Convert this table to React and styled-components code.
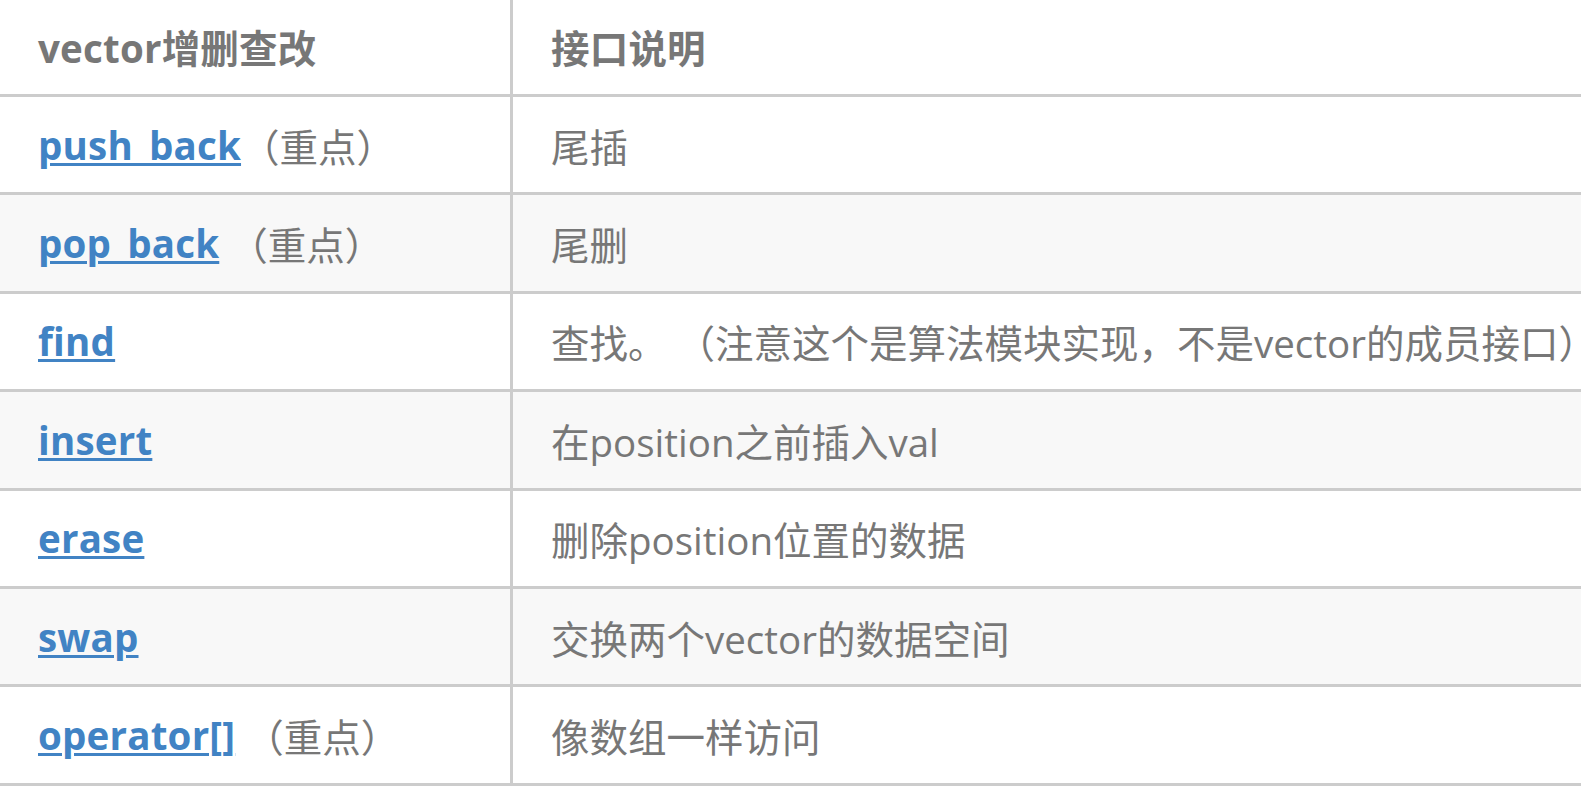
import styled, { createGlobalStyle } from "styled-components";

const rows = [
  { name: "push_back", note: "（重点）", desc: "尾插" },
  { name: "pop_back", note: " （重点）", desc: "尾删" },
  { name: "find", desc: "查找。 （注意这个是算法模块实现，不是vector的成员接口）" },
  { name: "insert", desc: "在position之前插入val" },
  { name: "erase", desc: "删除position位置的数据" },
  { name: "swap", desc: "交换两个vector的数据空间" },
  { name: "operator[]", note: " （重点）", desc: "像数组一样访问" },
];

const GlobalStyle = createGlobalStyle`
  html, body {
    margin: 0;
    padding: 0;
    background: #ffffff;
    overflow: hidden;
  }
`;

const Page = styled.div`
  width: 1581px;
  height: 787px;
  overflow: hidden;
  font-family: "Open Sans", "Noto Sans CJK SC", sans-serif;
  font-size: 38.5px;
  color: #777777;
`;

const Table = styled.div`
  margin-top: -1.4px;
  display: grid;
  grid-template-columns: 510px 1fr;
  grid-auto-rows: 95.4px;
  gap: 3px;
  background: #cccccc;
  border-bottom: 3px solid #cccccc;
`;

const Cell = styled.div`
  display: flex;
  align-items: center;
  padding-left: 38px;
  white-space: pre;
  background: ${(p) => (p.$striped ? "#f8f8f8" : "#ffffff")};
  font-weight: ${(p) => (p.$head ? 700 : 400)};
  letter-spacing: ${(p) => (p.$head ? "0.2px" : "0")};
`;

const Link = styled.a`
  color: #4183c4;
  font-weight: 700;
  letter-spacing: 0.2px;
  text-decoration: underline;
  text-decoration-thickness: 3px;
  text-underline-offset: 3px;
`;

const App = () => {
  return (
    <Page>
      <GlobalStyle />
      <Table>
        <Cell $head>vector增删查改</Cell>
        <Cell $head>接口说明</Cell>
        {rows.map((r, i) => (
          <>
            <Cell key={r.name + "a"} $striped={i % 2 === 1}>
              <Link>{r.name}</Link>
              {r.note}
            </Cell>
            <Cell key={r.name + "b"} $striped={i % 2 === 1}>
              {r.desc}
            </Cell>
          </>
        ))}
      </Table>
    </Page>
  );
};

export default App;
